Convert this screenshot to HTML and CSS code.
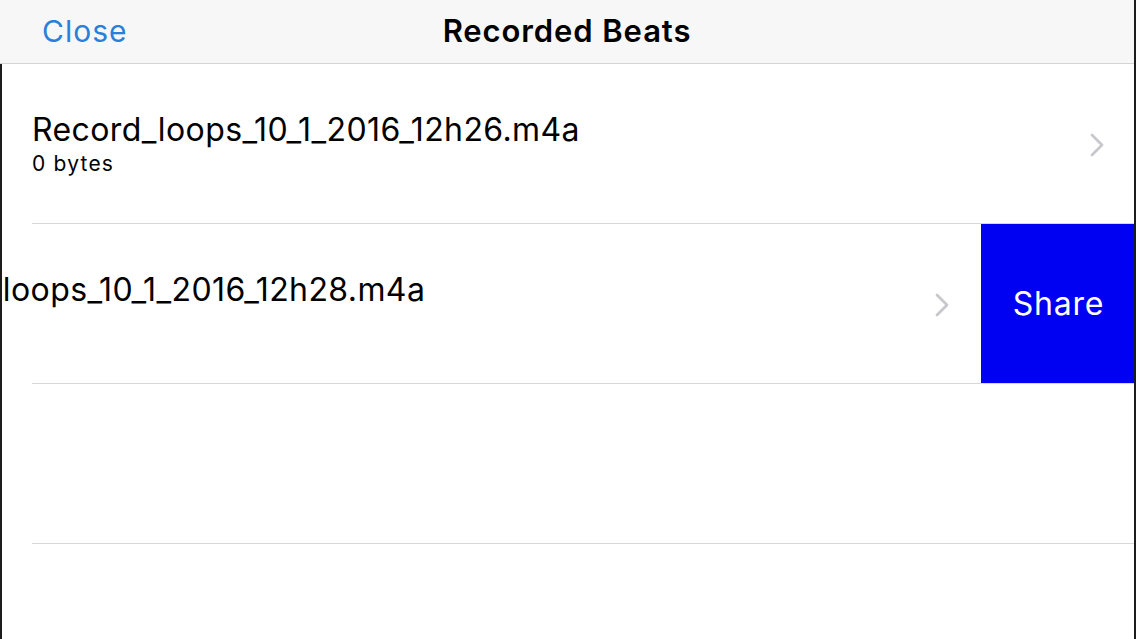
FILE: index.html
```html
<!DOCTYPE html>
<html lang="en">
<head>
    <meta charset="UTF-8">
    <meta name="viewport" content="width=device-width, initial-scale=1.0">
    <title>Recorded Beats</title>
    <link rel="stylesheet" href="styles.css">
</head>
<body>

<div class="screen">
    <div class="nav-bar">
        <a class="nav-close" href="#">Close</a>
        <h1>Recorded Beats</h1>
        <span></span>
    </div>

    <div class="list">
        <div class="row">
            <div class="cell">
                <div class="cell-text">
                    <div class="file-name">Record_loops_10_1_2016_12h26.m4a</div>
                    <div class="file-size">0 bytes</div>
                </div>
                <svg class="chevron" width="14" height="24" viewBox="0 0 14 24">
                    <path d="M2 2 L12 12 L2 22" fill="none" stroke="#c7c7cc" stroke-width="2.8" stroke-linecap="round" stroke-linejoin="round"/>
                </svg>
            </div>
        </div>

        <div class="row swiped">
            <div class="cell">
                <div class="cell-text">
                    <div class="file-name">Record_loops_10_1_2016_12h28.m4a</div>
                    <div class="file-size">&nbsp;</div>
                </div>
                <svg class="chevron" width="14" height="24" viewBox="0 0 14 24">
                    <path d="M2 2 L12 12 L2 22" fill="none" stroke="#c7c7cc" stroke-width="2.8" stroke-linecap="round" stroke-linejoin="round"/>
                </svg>
            </div>
            <button class="share-btn">Share</button>
        </div>

        <div class="row empty"></div>
        <div class="row empty"></div>
    </div>
</div>

</body>
</html>
```

FILE: styles.css
```css
html, body {
    margin: 0;
    padding: 0;
    background-color: #ffffff;
}
body {
    font-family: Inter, "Noto Sans", sans-serif;
    color: #000;
    overflow: hidden;
}
.screen {
    width: 1136px;
    height: 639px;
    box-sizing: border-box;
    border-right: 2px solid #1c1c1c;
    overflow: hidden;
}
.nav-bar {
    height: 64px;
    box-sizing: border-box;
    background-color: #f7f7f7;
    border-bottom: 1px solid #d4d4d4;
    display: grid;
    grid-template-columns: 1fr auto 1fr;
    align-items: center;
    padding: 0 42px 2px 42px;
}
.nav-close {
    color: #2a7fd8;
    text-decoration: none;
    font-size: 30px;
    letter-spacing: 1px;
}
.nav-bar h1 {
    margin: 0;
    font-size: 31px;
    font-weight: 600;
    letter-spacing: 0.9px;
}
.list {
    border-left: 2px solid #1c1c1c;
    height: 575px;
}
.row {
    height: 160px;
    box-sizing: border-box;
    display: flex;
    overflow: hidden;
    position: relative;
}
.row::after {
    content: "";
    position: absolute;
    left: 30px;
    right: 0;
    bottom: 0;
    height: 1px;
    background-color: #d8d8d8;
}
.cell {
    flex: 0 0 1134px;
    box-sizing: border-box;
    display: flex;
    align-items: center;
    padding: 0 32px 0 30px;
}
.cell-text {
    flex: 1;
    margin-top: 2px;
}
.file-name {
    font-size: 32px;
    letter-spacing: 0.4px;
    line-height: 38px;
}
.file-size {
    font-size: 21px;
    letter-spacing: 1.2px;
    line-height: 30px;
}
.chevron {
    display: block;
    margin-top: 2px;
}
.swiped .cell {
    margin-left: -155px;
}
.share-btn {
    flex: 0 0 155px;
    height: 159px;
    border: none;
    background-color: #0000f2;
    color: #ffffff;
    font-family: inherit;
    font-size: 32px;
    letter-spacing: 0.8px;
    padding: 0;
    position: relative;
    z-index: 1;
}
```
